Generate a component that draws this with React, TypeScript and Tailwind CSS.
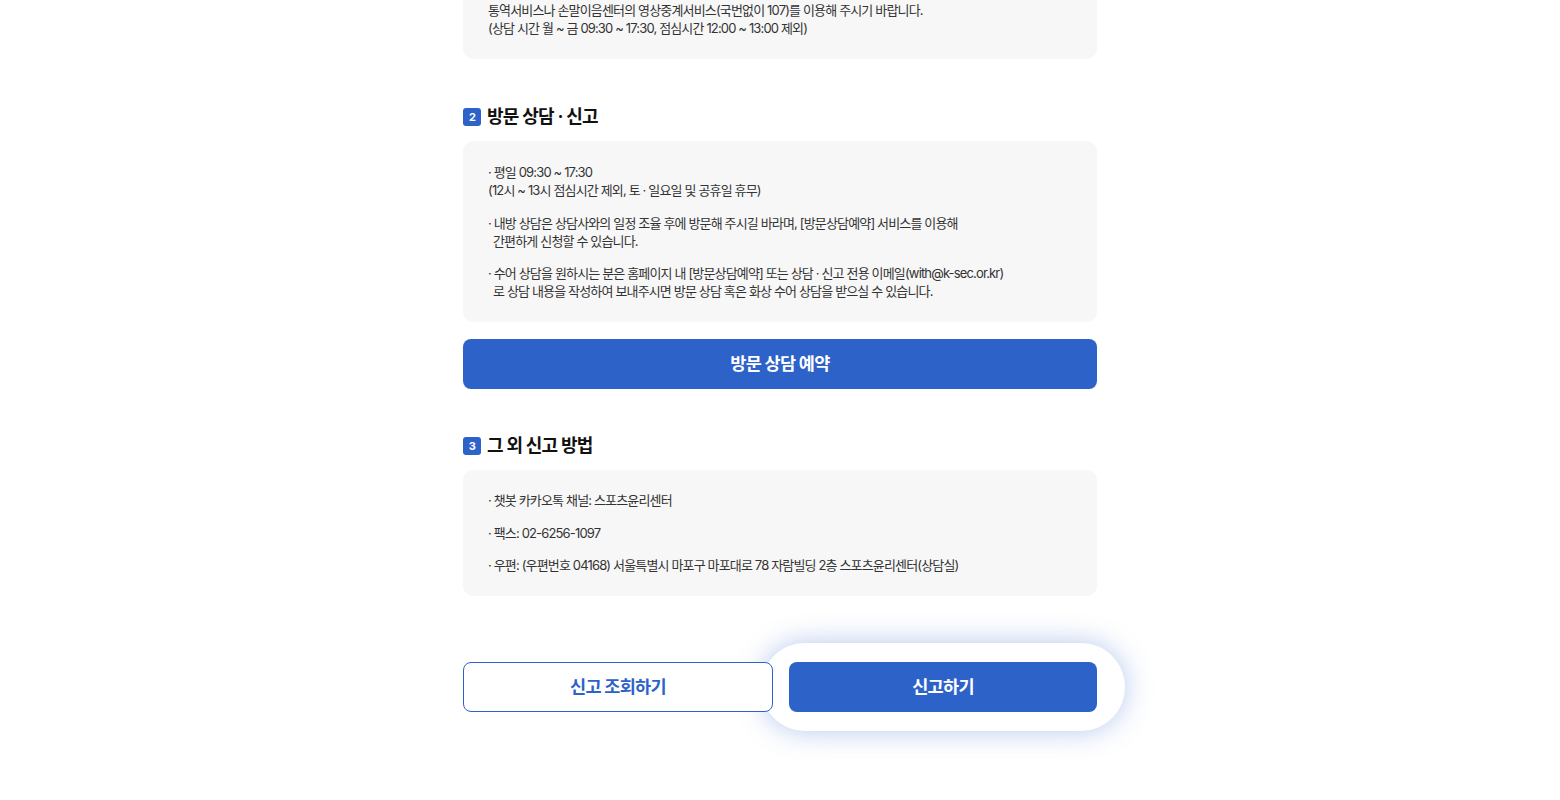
const font = { fontFamily: 'Inter, "Noto Sans CJK KR", sans-serif' };

function Badge({ n }: { n: string }) {
  return (
    <span className="flex h-[18px] w-[18px] items-center justify-center rounded-[3px] bg-[#2d62c8] text-[11px] font-bold leading-none text-white">
      {n}
    </span>
  );
}

function Heading({ n, title }: { n: string; title: string }) {
  return (
    <h3 className="flex h-6 items-center gap-[6px]">
      <Badge n={n} />
      <span className="text-[18px] font-bold tracking-[-0.04em] text-[#111]">{title}</span>
    </h3>
  );
}

function Item({ children }: { children: React.ReactNode }) {
  return <p className="pl-[5px] -indent-[5px]">{children}</p>;
}

export default function App() {
  return (
    <div className="min-h-[800px] bg-white" style={font}>
      <div className="mx-auto mt-[-21px] w-[634px] pb-[89px] text-[13px] leading-[18px] tracking-[-0.065em] text-[#333]">
        <div className="rounded-[10px] bg-[#f7f7f7] px-[25px] py-[22px]">
          <p>통역서비스나 손말이음센터의 영상중계서비스(국번없이 107)를 이용해 주시기 바랍니다.</p>
          <p>(상담 시간 월 ~ 금 09:30 ~ 17:30, 점심시간 12:00 ~ 13:00 제외)</p>
        </div>

        <section className="mt-[46px]">
          <Heading n="2" title="방문 상담 · 신고" />
          <div className="mt-3 flex flex-col gap-[14.5px] rounded-[10px] bg-[#f7f7f7] px-[25px] py-[22px]">
            <div>
              <p>· 평일 09:30 ~ 17:30</p>
              <p>(12시 ~ 13시 점심시간 제외, 토 · 일요일 및 공휴일 휴무)</p>
            </div>
            <Item>
              · 내방 상담은 상담사와의 일정 조율 후에 방문해 주시길 바라며, [방문상담예약] 서비스를 이용해
              <br />
              간편하게 신청할 수 있습니다.
            </Item>
            <Item>
              · 수어 상담을 원하시는 분은 홈페이지 내 [방문상담예약] 또는 상담 · 신고 전용 이메일(with@k-sec.or.kr)
              <br />
              로 상담 내용을 작성하여 보내주시면 방문 상담 혹은 화상 수어 상담을 받으실 수 있습니다.
            </Item>
          </div>
          <button className="mt-[17px] flex h-[50px] w-full items-center justify-center rounded-lg bg-[#2d62c8] text-[17.5px] font-bold tracking-[-0.04em] text-white">
            방문 상담 예약
          </button>
        </section>

        <section className="mt-[45px]">
          <Heading n="3" title="그 외 신고 방법" />
          <div className="mt-3 flex flex-col gap-[14.5px] rounded-[10px] bg-[#f7f7f7] px-[25px] pt-[21px] pb-[22px]">
            <Item>· 챗봇 카카오톡 채널: 스포츠윤리센터</Item>
            <Item>· 팩스: 02-6256-1097</Item>
            <Item>· 우편: (우편번호 04168) 서울특별시 마포구 마포대로 78 자람빌딩 2층 스포츠윤리센터(상담실)</Item>
          </div>
        </section>

        <div className="mt-[66px] flex gap-4">
          <button className="relative z-10 flex h-[50px] flex-1 items-center justify-center rounded-lg border border-[#2d62c8] bg-white text-[17.5px] font-bold tracking-[-0.04em] text-[#2d62c8]">
            신고 조회하기
          </button>
          <div className="relative flex-1">
            <div className="absolute -inset-x-[28px] -inset-y-[19px] rounded-full bg-white shadow-[0_0_28px_rgba(45,98,200,0.35)]" />
            <button className="relative flex h-[50px] w-full items-center justify-center rounded-lg bg-[#2d62c8] text-[17.5px] font-bold tracking-[-0.04em] text-white">
              신고하기
            </button>
          </div>
        </div>
      </div>
    </div>
  );
}
